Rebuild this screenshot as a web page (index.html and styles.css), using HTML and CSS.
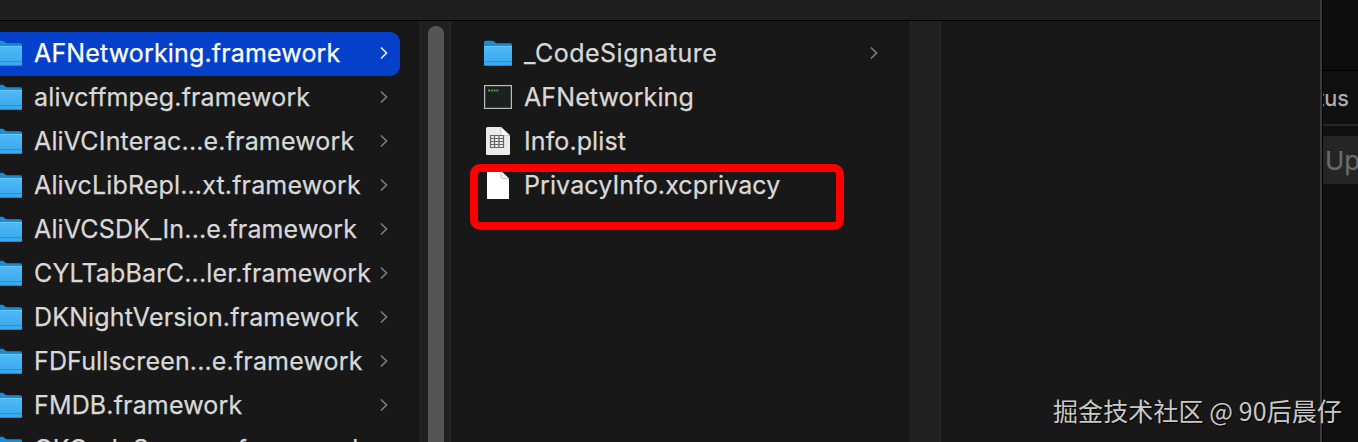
FILE: index.html
```
<!DOCTYPE html>
<html lang="zh-CN">
<head>
  <meta charset="utf-8">
  <title>Finder</title>
  <link rel="stylesheet" href="styles.css">
</head>
<body>
  <!-- shared icons -->
  <svg class="defs" width="0" height="0">
    <defs>
      <linearGradient id="folderFill" x1="0" y1="0" x2="0" y2="1">
        <stop offset="0" stop-color="#4fbaf4"/>
        <stop offset="1" stop-color="#36a6ee"/>
      </linearGradient>
    </defs>
    <symbol id="folder" viewBox="0 0 28 27">
      <path d="M0 2.200Q0 .7 1.500 .7H8q1.200 0 2 .8l1.200 1.100q.8.7 2 .7h13.300Q28 3.300 28 5v4H0z" fill="#1b8bd4"/>
      <path d="M0 6h28v18.500q0 1.500-1.500 1.500h-25Q0 26 0 24.500z" fill="url(#folderFill)"/>
      <path d="M0 6.500h28" stroke="#68c9f8"/>
      <path d="M0 21.500h28" stroke="#2a91d5"/>
      <path d="M.5 25.500h27" stroke="#2589cb"/>
    </symbol>
    <symbol id="chevron" viewBox="0 0 8 14">
      <path d="M1 1.500 6.500 7 1 12.500" fill="none" stroke="currentColor" stroke-width="1.700"/>
    </symbol>
  </svg>

  <div class="screen">
    <div class="window">
      <div class="toolbar"></div>
      <div class="columns">
        <div class="column column-frameworks">
          <div class="row selected"><svg class="folder"><use href="#folder"/></svg><span class="name">AFNetworking.framework</span><svg class="chevron"><use href="#chevron"/></svg></div>
          <div class="row"><svg class="folder"><use href="#folder"/></svg><span class="name">alivcffmpeg.framework</span><svg class="chevron"><use href="#chevron"/></svg></div>
          <div class="row"><svg class="folder"><use href="#folder"/></svg><span class="name">AliVCInterac...e.framework</span><svg class="chevron"><use href="#chevron"/></svg></div>
          <div class="row"><svg class="folder"><use href="#folder"/></svg><span class="name">AlivcLibRepl...xt.framework</span><svg class="chevron"><use href="#chevron"/></svg></div>
          <div class="row"><svg class="folder"><use href="#folder"/></svg><span class="name">AliVCSDK_In...e.framework</span><svg class="chevron"><use href="#chevron"/></svg></div>
          <div class="row"><svg class="folder"><use href="#folder"/></svg><span class="name">CYLTabBarC...ler.framework</span><svg class="chevron"><use href="#chevron"/></svg></div>
          <div class="row"><svg class="folder"><use href="#folder"/></svg><span class="name">DKNightVersion.framework</span><svg class="chevron"><use href="#chevron"/></svg></div>
          <div class="row"><svg class="folder"><use href="#folder"/></svg><span class="name">FDFullscreen...e.framework</span><svg class="chevron"><use href="#chevron"/></svg></div>
          <div class="row"><svg class="folder"><use href="#folder"/></svg><span class="name">FMDB.framework</span><svg class="chevron"><use href="#chevron"/></svg></div>
          <div class="row"><svg class="folder"><use href="#folder"/></svg><span class="name">GKCodeScanner.framework</span><svg class="chevron"><use href="#chevron"/></svg></div>
        </div>
        <div class="scroller"><div class="thumb"></div></div>

        <div class="column column-files">
          <div class="row"><svg class="folder"><use href="#folder"/></svg><span class="name name-wide">_CodeSignature</span><svg class="chevron"><use href="#chevron"/></svg></div>
          <div class="row">
            <svg class="icon" viewBox="0 0 28 28">
              <rect x=".6" y="2.600" width="26.800" height="22.800" fill="#1b211f" stroke="#b9bcba" stroke-width="1.200"/>
              <path d="M4 7.500h11" stroke="#36a344" stroke-width="2" stroke-dasharray="2 .8"/>
            </svg>
            <span class="name">AFNetworking</span>
          </div>
          <div class="row">
            <svg class="icon" viewBox="0 0 28 28">
              <path d="M3.500 0H17l9 8.500V26.500q0 1.500-1.500 1.500h-21Q2 28 2 26.500v-25Q2 0 3.500 0z" fill="#ececec"/>
              <path d="M17 0l9 8.500h-7.500Q17 8.500 17 7z" fill="#fff" stroke="#aaa" stroke-width=".6"/>
              <path d="M6.500 8.500h13v12h-13zM6.500 11.500h13M6.500 14.500h13M6.500 17.500h13M10.500 8.500v12M15 8.500v12" fill="none" stroke="#666" stroke-width="1.200"/>
            </svg>
            <span class="name">Info.plist</span>
          </div>
          <div class="row">
            <svg class="icon" viewBox="0 0 28 28">
              <path d="M3 0h14l8 7.500V28H3z" fill="#fff"/>
              <path d="M17 0v5.500q0 2 2 2h6" fill="#f1f1f1" stroke="#bbb" stroke-width=".8"/>
            </svg>
            <span class="name">PrivacyInfo.xcprivacy</span>
          </div>
          <div class="highlight"></div>
        </div>
        <div class="scroller"></div>
      </div>
    </div>

    <!-- window behind -->
    <div class="behind">
      <div class="behind-head"></div>
      <div class="behind-status"><span>tus</span></div>
      <div class="behind-field">Up</div>
    </div>
  </div>

  <div class="watermark">掘金技术社区 @ 90后晨仔</div>
</body>
</html>
```
FILE: styles.css
```
body {
  margin: 0;
  background: #181818;
  font-family: Inter, "Liberation Sans", sans-serif;
  overflow: hidden;
}

.defs {
  position: absolute;
}

.screen {
  display: flex;
  height: 442px;
  overflow: hidden;
}

/* Finder window */
.window {
  box-sizing: border-box;
  flex: none;
  width: 1322px;
  border-right: 2px solid #3a3a3a;
  display: flex;
  flex-direction: column;
}

.toolbar {
  flex: none;
  height: 20px;
  background: #1f1f1f;
  border-bottom: 1px solid #000;
}

.columns {
  flex: 1;
  min-height: 0;
  display: flex;
}

.column {
  box-sizing: border-box;
  position: relative;
  flex: none;
  padding-top: 11px;
}

.column-frameworks {
  width: 420px;
  padding-right: 20px;
}

.column-files {
  width: 459px;
  padding-right: 20px;
}

.row {
  box-sizing: border-box;
  height: 44px;
  display: flex;
  align-items: center;
  color: #d8d8d8;
  font-size: 25px;
  letter-spacing: 0.1px;
  line-height: 42px;
  white-space: nowrap;
  -webkit-text-stroke: 0.25px currentColor;
}

.column-frameworks .row {
  padding-right: 12.5px;
  letter-spacing: 0.15px;
}

.column-files .row {
  padding: 0 12.5px 0 33px;
}

.selected {
  background: #0540cb;
  border-radius: 0 10px 10px 0;
}

.row.selected {
  color: #fff;
}

.folder {
  flex: none;
  width: 28px;
  height: 27px;
  margin-bottom: 2px;
}

.column-frameworks .folder {
  margin-left: -6px;
}

.icon {
  flex: none;
  width: 28px;
  height: 28px;
  margin-bottom: 2px;
}

.name {
  margin-left: 12px;
  padding-bottom: 2px;
}

.name-wide {
  letter-spacing: 0.5px;
}

.chevron {
  flex: none;
  width: 8px;
  height: 14px;
  margin-left: auto;
  margin-bottom: 2px;
  color: #7b7b7b;
}

.selected .chevron {
  color: #e4ecff;
}

.scroller {
  box-sizing: border-box;
  flex: none;
  width: 31px;
  background: #202020;
  border-left: 1px solid #2b2b2b;
  border-right: 2px solid #262626;
}

.thumb {
  width: 16px;
  height: 500px;
  margin: 5px 0 0 7px;
  border-radius: 8px;
  background: #555;
}

/* red frame around the privacy manifest */
.highlight {
  position: absolute;
  left: 19px;
  top: 143px;
  box-sizing: border-box;
  width: 374px;
  height: 66px;
  border: 8px solid #fe0000;
  border-radius: 10px;
}

.behind {
  flex: 1;
  background: #101010;
  border-left: 1px solid #000;
  overflow: hidden;
}

.behind-head {
  height: 70px;
  background: #0d0d0d;
  border-bottom: 1px solid #000;
}

.behind-status {
  display: flex;
  align-items: center;
  height: 53px;
  border-bottom: 2px solid #262626;
  color: #b2b2b2;
  font-size: 22px;
}

.behind-status span {
  margin-left: -6px;
  -webkit-text-stroke: 0.25px currentColor;
}

.behind-field {
  height: 48px;
  margin-top: 10px;
  padding-left: 2px;
  background: #252525;
  color: #6b6b6b;
  font-size: 26px;
  line-height: 50px;
  -webkit-text-stroke: 0.25px currentColor;
}

.watermark {
  position: absolute;
  left: 1053px;
  top: 392px;
  color: #c9c9c9;
  font-family: "Noto Sans CJK SC", sans-serif;
  font-size: 25px;
  letter-spacing: 0.1px;
  line-height: 36px;
  white-space: nowrap;
  text-shadow: 1px 1px 1px #000;
}
```
